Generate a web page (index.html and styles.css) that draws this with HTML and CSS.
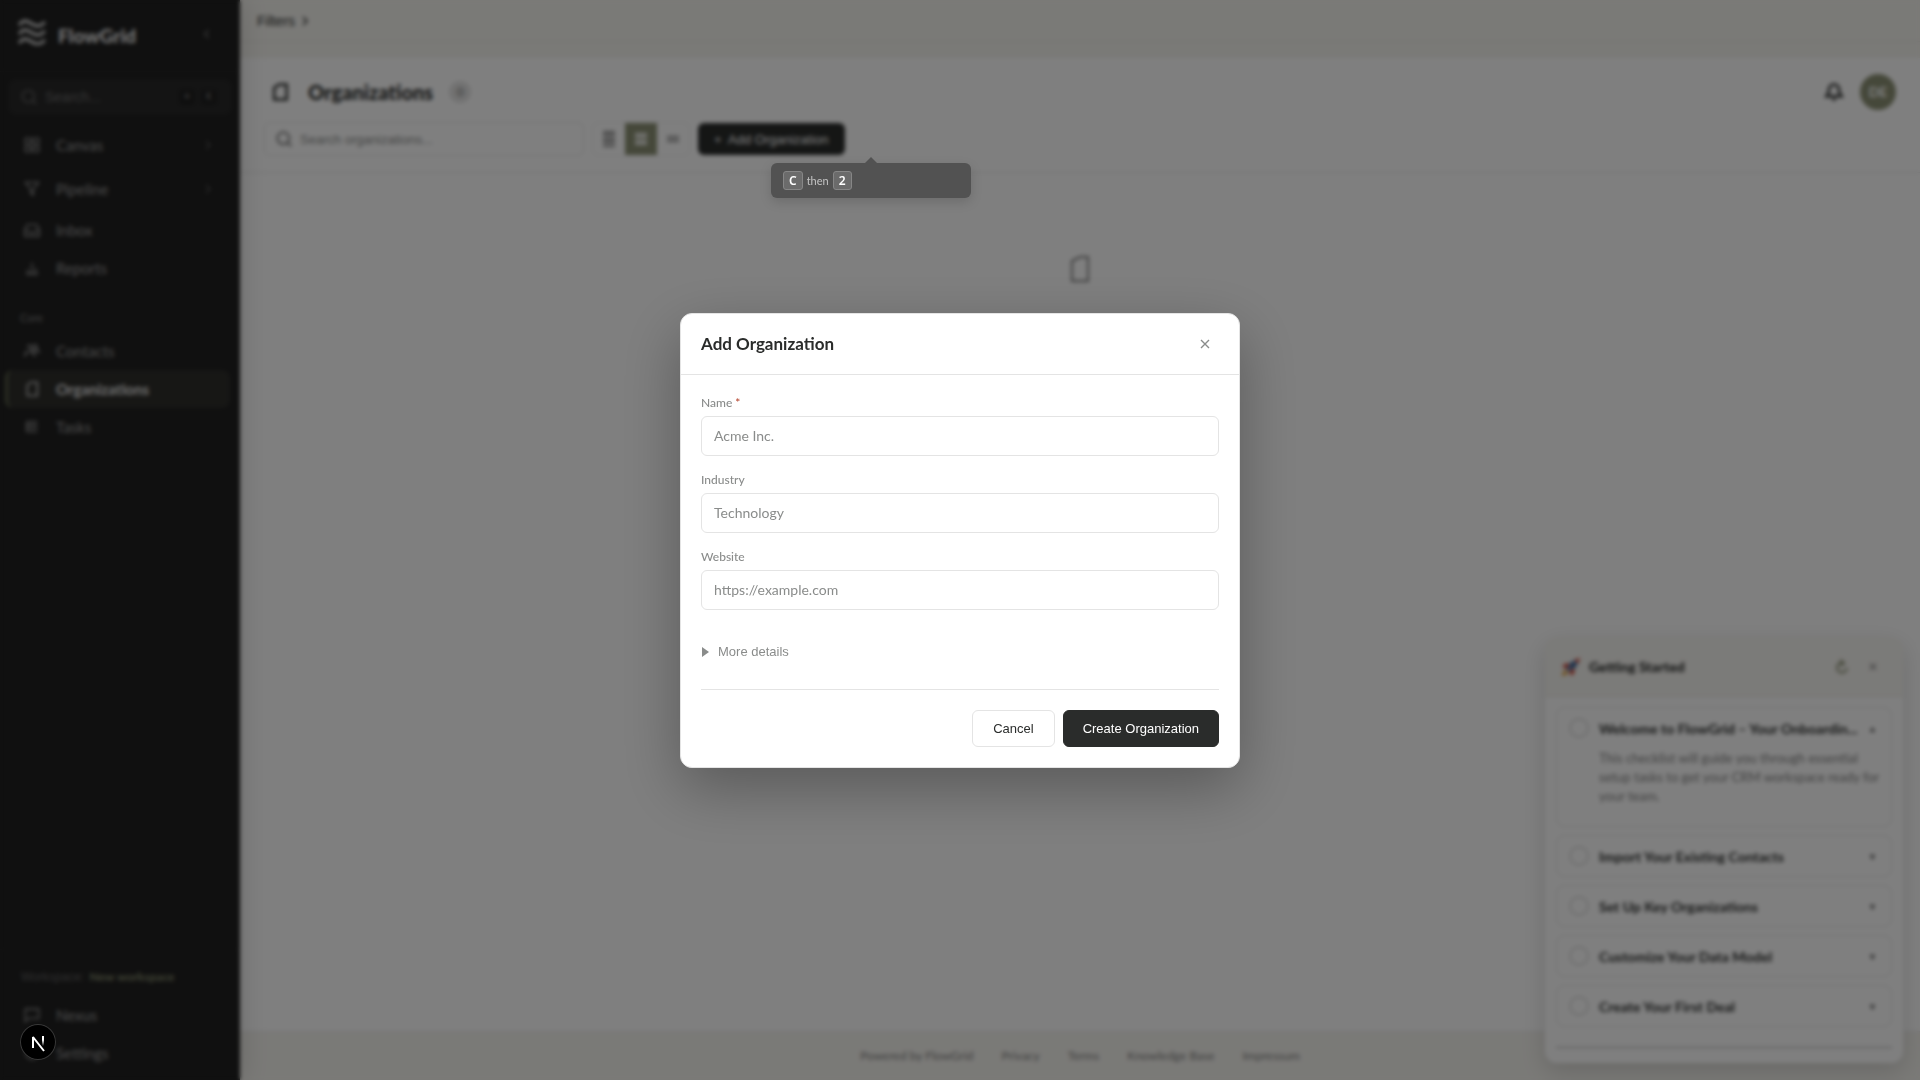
FILE: index.html
```
<!DOCTYPE html>
<html lang="en">
<head>
    <meta charset="UTF-8">
    <meta name="viewport" content="width=device-width, initial-scale=1.0">
    <title>Organizations - FlowGrid</title>
    <link rel="stylesheet" href="styles.css">
</head>
<body>
    <aside class="sidebar">
        <div class="brand">
            <svg class="logo" viewBox="0 0 28 26" width="28" height="26">
                <path d="M1 6c5-6 8-4 13-1s8 3 13-2M1 15c5-6 8-4 13-1s8 3 13-2M1 24c5-6 8-4 13-1s8 3 13-2"/>
            </svg>
            <span class="brand-name">FlowGrid</span>
            <button class="collapse" aria-label="Collapse sidebar">
                <svg class="icon" viewBox="0 0 24 24" width="14" height="14"><path d="M15 5l-7 7 7 7"/></svg>
            </button>
        </div>

        <button class="side-search">
            <svg class="icon" viewBox="0 0 24 24" width="16" height="16"><circle cx="11" cy="11" r="9"/><path d="M17 17l6 6"/></svg>
            <span>Search...</span>
            <kbd>⌘</kbd>
            <kbd>K</kbd>
        </button>

        <nav class="nav">
            <a href="#" class="nav-item tall">
                <svg class="icon" viewBox="0 0 24 24" width="16" height="16"><path d="M2 2h8v8H2zM14 2h8v8h-8zM2 14h8v8H2zM14 14h8v8h-8z"/></svg>
                <span>Canvas</span>
                <svg class="icon chevron" viewBox="0 0 24 24" width="12" height="12"><path d="M8 4l8 8-8 8"/></svg>
            </a>
            <a href="#" class="nav-item tall">
                <svg class="icon" viewBox="0 0 24 24" width="16" height="16"><path d="M2 2h20l-8 10v9l-4-2v-7z"/></svg>
                <span>Pipeline</span>
                <svg class="icon chevron" viewBox="0 0 24 24" width="12" height="12"><path d="M8 4l8 8-8 8"/></svg>
            </a>
            <a href="#" class="nav-item">
                <svg class="icon" viewBox="0 0 24 24" width="16" height="16"><path d="M1 12l4-8h14l4 8v9H1zM1 13h6l2 3h6l2-3h6"/></svg>
                <span>Inbox</span>
            </a>
            <a href="#" class="nav-item">
                <svg class="icon" viewBox="0 0 24 24" width="16" height="16"><path d="M6 20v-6M12 20V4M18 20v-8M3 21h18"/></svg>
                <span>Reports</span>
            </a>
            <h2 class="nav-title">Core</h2>
            <a href="#" class="nav-item">
                <svg class="icon bold" viewBox="0 0 24 24" width="16" height="16"><path d="M1 20c1-5 3-7 6-8M5 6a4 4 0 1 1 4 6c4 1 6 3 7 8M14 3c5-1 7 5 3 8 3 0 5 1 6 4"/></svg>
                <span>Contacts</span>
            </a>
            <a href="#" class="nav-item active">
                <svg class="icon" viewBox="0 0 24 24" width="16" height="16"><path d="M5 6l5-4h10v20H5z"/></svg>
                <span>Organizations</span>
            </a>
            <a href="#" class="nav-item">
                <svg class="icon" viewBox="0 0 24 24" width="16" height="16"><path d="M4 4h16M4 9h16M4 14h16M4 19h16M4 4v15"/></svg>
                <span>Tasks</span>
            </a>
        </nav>

        <div class="side-bottom">
            <div class="workspace">Workspace: <strong>New workspace</strong></div>
            <a href="#" class="nav-item">
                <svg class="icon" viewBox="0 0 24 24" width="16" height="16"><path d="M2 3h20v14H7l-5 5z"/></svg>
                <span>Nexus</span>
            </a>
            <a href="#" class="nav-item">
                <svg class="icon" viewBox="0 0 24 24" width="16" height="16"><circle cx="12" cy="12" r="9"/><circle cx="12" cy="12" r="3"/></svg>
                <span>Settings</span>
            </a>
        </div>
    </aside>

    <div class="page">
        <button class="filters">Filters
            <svg class="icon" viewBox="0 0 24 24" width="12" height="12"><path d="M8 4l8 8-8 8"/></svg>
        </button>

        <main class="content">
            <header class="page-header">
                <div class="title-row">
                    <svg class="icon bold" viewBox="0 0 24 24" width="20" height="20"><path d="M5 7l6-4h9v18H5z"/></svg>
                    <h1>Organizations</h1>
                    <span class="count">0</span>
                    <button class="bell" aria-label="Notifications">
                        <svg class="icon bold" viewBox="0 0 24 24" width="20" height="20"><path d="M3 17h18c-2-2-3-4-3-8a6 6 0 0 0-12 0c0 4-1 6-3 8zM10 21h4"/></svg>
                    </button>
                    <span class="avatar">DE</span>
                </div>
                <div class="toolbar">
                    <label class="search">
                        <svg class="icon bold" viewBox="0 0 24 24" width="16" height="16"><circle cx="11" cy="11" r="9"/><path d="M17 17l6 6"/></svg>
                        <input type="text" placeholder="Search organizations..." aria-label="Search organizations">
                    </label>
                    <div class="view-toggle">
                        <button aria-label="Compact rows"><svg class="icon" viewBox="0 0 16 16" width="16" height="16"><path d="M2 1h12M2 4h12M2 8h12M2 11h12M2 15h12"/></svg></button>
                        <button class="active" aria-label="Normal rows"><svg class="icon" viewBox="0 0 16 16" width="16" height="16"><path d="M2 3h12M2 6h12M2 10h12M2 13h12"/></svg></button>
                        <button aria-label="Wide rows"><svg class="icon" viewBox="0 0 16 16" width="16" height="16"><path d="M2 6h12M2 10h12"/></svg></button>
                    </div>
                    <button class="add-btn">+&nbsp; Add Organization</button>
                </div>
            </header>
            <div class="empty">
                <svg class="icon" viewBox="0 0 20 28" width="20" height="28"><path d="M2 6l8-4h8v24H2z"/></svg>
            </div>
        </main>

        <footer class="footer">
            <span>Powered by <a href="#">FlowGrid</a></span>
            <a href="#">Privacy</a>
            <a href="#">Terms</a>
            <a href="#">Knowledge Base</a>
            <a href="#">Impressum</a>
        </footer>
    </div>

    <section class="onboarding">
        <div class="onboarding-header">
            <svg class="rocket" viewBox="0 0 20 20" width="20" height="20">
                <path fill="#5b8fc7" d="M5 12C7 7 11 3 16 3l1 1c0 5-4 9-9 11z"/>
                <path fill="#d0402c" d="M13 3l6-2-2 6zM1 9l5-3 3 2-4 4zM11 19l3-5-2-3-4 4z"/>
                <path fill="#e39a2d" d="M5 13l2 2-2 3-4 1 1-4z"/>
                <circle cx="12" cy="8" r="2" fill="#2a3f5c"/>
            </svg>
            <h2>Getting Started</h2>
            <button aria-label="Refresh">
                <svg class="icon refresh" viewBox="0 0 16 16" width="16" height="16"><path d="M11 4a5 5 0 1 0 3 5M7 1l4 3-3 3"/></svg>
            </button>
            <button aria-label="Close checklist">✕</button>
        </div>
        <ul class="steps">
            <li>
                <div class="step"><span class="dot"></span><h3>Welcome to FlowGrid – Your Onboardin...</h3><span class="arrow">▲</span></div>
                <p>This checklist will guide you through essential setup tasks to get your CRM workspace ready for your team.</p>
            </li>
            <li><div class="step"><span class="dot"></span><h3>Import Your Existing Contacts</h3><span class="arrow">▼</span></div></li>
            <li><div class="step"><span class="dot"></span><h3>Set Up Key Organizations</h3><span class="arrow">▼</span></div></li>
            <li><div class="step"><span class="dot"></span><h3>Customize Your Data Model</h3><span class="arrow">▼</span></div></li>
            <li><div class="step"><span class="dot"></span><h3>Create Your First Deal</h3><span class="arrow">▼</span></div></li>
        </ul>
        <div class="progress"></div>
    </section>

    <!-- Add organization modal -->
    <div class="backdrop">
        <div class="modal" role="dialog" aria-labelledby="modalTitle">
            <div class="modal-header">
                <h2 id="modalTitle">Add Organization</h2>
                <button class="close" aria-label="Close">
                    <svg viewBox="0 0 10 10" width="10" height="10"><path d="M1 1l8 8M9 1l-8 8"/></svg>
                </button>
            </div>
            <form class="modal-form">
                <div class="field">
                    <label for="orgName">Name <span class="required">*</span></label>
                    <input type="text" id="orgName" placeholder="Acme Inc.">
                </div>
                <div class="field">
                    <label for="orgIndustry">Industry</label>
                    <input type="text" id="orgIndustry" placeholder="Technology">
                </div>
                <div class="field">
                    <label for="orgWebsite">Website</label>
                    <input type="url" id="orgWebsite" placeholder="https://example.com">
                </div>
                <details class="more">
                    <summary>More details</summary>
                </details>
                <div class="actions">
                    <button type="button" class="cancel">Cancel</button>
                    <button type="submit" class="create">Create Organization</button>
                </div>
            </form>
        </div>
    </div>

    <div class="tooltip"><kbd>C</kbd><span>then</span><kbd>2</kbd></div>

    <button class="dev-badge" aria-label="Open dev tools">
        <svg viewBox="0 0 36 36" width="36" height="36">
            <defs>
                <linearGradient id="fade" x1="0" y1="0" x2="0" y2="1">
                    <stop offset="0.4" stop-color="#fff"/>
                    <stop offset="1" stop-color="#fff" stop-opacity="0"/>
                </linearGradient>
            </defs>
            <path d="M13 24V13l11 14" fill="none" stroke="#fff" stroke-width="2" stroke-linejoin="bevel"/>
            <rect x="22" y="12" width="2" height="10" fill="url(#fade)"/>
        </svg>
    </button>
</body>
</html>
```
FILE: styles.css
```
/* Global Styles */
* {
    margin: 0;
    padding: 0;
    box-sizing: border-box;
}

body {
    display: flex;
    min-height: 100vh;
    font-family: Lato, "Liberation Sans", sans-serif;
    font-size: 14px;
    color: #2a2c2b;
    background-color: #ffffff;
}

button, input {
    font-family: "Liberation Sans", Arial, sans-serif;
    font-size: 14px;
    background: none;
    border: none;
}

button {
    cursor: pointer;
}

a {
    color: inherit;
    text-decoration: none;
}

.icon {
    fill: none;
    stroke: currentColor;
    stroke-width: 2;
    flex-shrink: 0;
}

.icon.bold {
    stroke-width: 3;
}

/* Sidebar */
.sidebar {
    width: 240px;
    flex-shrink: 0;
    display: flex;
    flex-direction: column;
    background-color: #202020;
    color: #9a9a9a;
    box-shadow: 4px 0 24px rgba(0, 0, 0, 0.12);
    z-index: 1;
}

.brand {
    display: flex;
    align-items: center;
    height: 72px;
    padding: 0 24px 8px 18px;
    gap: 12px;
    border-bottom: 1px solid #292929;
}

.logo {
    fill: none;
    stroke: #e0e0e0;
    stroke-width: 3;
}

.brand-name {
    flex: 1;
    padding-top: 8px;
    font-size: 19px;
    font-weight: 900;
    color: #e6e6e6;
}

.collapse {
    width: 18px;
    padding-top: 8px;
    color: #808080;
}

.side-search {
    display: flex;
    align-items: center;
    gap: 8px;
    height: 36px;
    margin: 7px 8px 8px;
    padding: 0 16px 0 13px;
    border-radius: 8px;
    background-color: #282828;
    color: #6c6c6c;
    font-size: 14px;
}

.side-search span {
    flex: 1;
    text-align: left;
}

.side-search kbd {
    width: 14px;
    font-size: 10px;
    line-height: 14px;
    background-color: #1c1c1c;
    color: #7c7c7c;
}

.nav {
    display: flex;
    flex-direction: column;
    flex: 1;
    padding-bottom: 12px;
}

.nav-item {
    display: flex;
    align-items: center;
    gap: 16px;
    height: 38px;
    margin: 0 10px 0 5px;
    padding: 0 16px;
    border-left: 3px solid transparent;
    border-radius: 8px;
    font-size: 15px;
}

.nav-item span {
    flex: 1;
}

.nav-item.tall {
    height: 44px;
}

.nav-item .chevron {
    color: #808080;
}

.nav-item.active {
    background-color: #2e2e2b;
    border-left-color: #5a6049;
    color: #e4e4e4;
    font-weight: 700;
}

.nav-title {
    margin: 24px 20px 7px;
    font-size: 11px;
    line-height: 14px;
    font-weight: 400;
    color: #808080;
}

.side-bottom {
    padding: 8px 0;
    border-top: 1px solid #262626;
}

.workspace {
    height: 34px;
    margin: 2px 8px;
    padding: 0 12px;
    border: 1px solid #262626;
    border-radius: 6px;
    font-family: "Liberation Sans", Arial, sans-serif;
    font-size: 12px;
    line-height: 32px;
    color: #606060;
}

.workspace strong {
    margin-left: 2px;
    font-family: Lato, sans-serif;
    color: #80866a;
}

/* Page */
.page {
    flex: 1;
    min-width: 0;
    display: flex;
    flex-direction: column;
    background-color: #f5f4ef;
}

.filters {
    display: flex;
    align-items: center;
    gap: 4px;
    height: 42px;
    margin-bottom: 16px;
    padding: 0 17px;
    border-bottom: 1px solid #e8e8e2;
    color: #2a2c2b;
}

.filters .icon {
    stroke-width: 3;
}

.content {
    flex: 1;
    background-color: #ffffff;
}

.page-header {
    padding: 16px 24px;
    border-bottom: 1px solid #e8e8e8;
}

.title-row {
    display: flex;
    align-items: center;
    height: 36px;
    padding-left: 6px;
    margin-bottom: 12px;
}

h1 {
    margin: 0 16px 0 18px;
    font-size: 20px;
    font-weight: 900;
}

.count {
    width: 22px;
    border-radius: 11px;
    background-color: #e4e4e4;
    font-size: 12px;
    line-height: 22px;
    text-align: center;
    color: #707070;
}

.bell {
    height: 20px;
    margin-left: auto;
    margin-right: 16px;
    color: #2a2c2b;
}

.avatar {
    width: 36px;
    border-radius: 50%;
    background-color: #8b9074;
    color: #ffffff;
    font-weight: 700;
    line-height: 36px;
    text-align: center;
}

.toolbar {
    display: flex;
    align-items: center;
    gap: 8px;
}

.search {
    display: flex;
    align-items: center;
    gap: 8px;
    width: 320px;
    height: 34px;
    padding: 0 11px;
    border: 1px solid #e4e4e4;
    border-radius: 6px;
    color: #808080;
}

.search input {
    flex: 1;
    min-width: 0;
    font-size: 13px;
}

.view-toggle {
    display: flex;
    width: 98px;
    height: 34px;
    border: 1px solid #eeeeee;
    border-radius: 6px;
    color: #808080;
}

.view-toggle button {
    flex: 1;
    display: flex;
    align-items: center;
    justify-content: center;
    color: inherit;
}

.view-toggle .active {
    background-color: #8b9074;
    color: #ffffff;
}

.add-btn {
    height: 32px;
    padding: 0 16px;
    border-radius: 6px;
    background-color: #2a2c2b;
    color: #ffffff;
    font-size: 13px;
}

.empty {
    padding: 82px 0;
    text-align: center;
    color: #808080;
}

/* Footer */
.footer {
    display: flex;
    justify-content: center;
    gap: 28px;
    padding: 17px;
    border-top: 1px solid #ececec;
    font-size: 12px;
    line-height: 14px;
    color: #808080;
}

/* Getting started checklist */
.onboarding {
    position: fixed;
    right: 17px;
    bottom: 17px;
    width: 358px;
    border-radius: 12px;
    background-color: #ffffff;
    box-shadow: 0 8px 24px rgba(0, 0, 0, 0.15);
    overflow: hidden;
}

.onboarding-header {
    display: flex;
    align-items: center;
    gap: 8px;
    height: 60px;
    padding: 0 18px 0 16px;
    border-bottom: 1px solid #e8e8e2;
    background-color: #f7f6f2;
}

.onboarding-header h2 {
    flex: 1;
    font-size: 14px;
    font-weight: 900;
}

.onboarding-header button {
    width: 24px;
    height: 24px;
    color: #808080;
    font-size: 12px;
}

.onboarding-header .refresh {
    display: block;
    margin: 4px auto;
    color: #8b9074;
}

.steps {
    display: flex;
    flex-direction: column;
    gap: 8px;
    padding: 10px 11px 19px;
    list-style: none;
}

.steps li {
    padding: 10px 8px 10px 12px;
    border: 1px solid #e4e4e4;
    border-radius: 8px;
}

.step {
    display: flex;
    align-items: center;
    gap: 10px;
    height: 20px;
    margin-right: 6px;
}

.dot {
    width: 20px;
    height: 20px;
    flex-shrink: 0;
    border: 2px solid #dedede;
    border-radius: 50%;
}

.step h3 {
    flex: 1;
    min-width: 0;
    white-space: nowrap;
    font-size: 14px;
    font-weight: 700;
}

.arrow {
    font-size: 9px;
    color: #606060;
}

.steps p {
    padding: 11px 0 10px 30px;
    font-size: 13px;
    line-height: 19px;
    color: #808080;
}

.progress {
    height: 3px;
    margin: 0 11px 14px;
    background-color: #e0e0e0;
}

/* Modal */
.backdrop {
    position: fixed;
    inset: 0;
    z-index: 10;
    display: flex;
    align-items: center;
    justify-content: center;
    background-color: rgba(0, 0, 0, 0.5);
    backdrop-filter: blur(2px);
}

.modal {
    width: 560px;
    max-width: 90%;
    border: 1px solid #e4e4e4;
    border-radius: 12px;
    background-color: #ffffff;
    box-shadow: 0 20px 60px rgba(0, 0, 0, 0.3);
}

.modal-header {
    display: flex;
    align-items: center;
    justify-content: space-between;
    height: 61px;
    padding: 0 20px;
    border-bottom: 1px solid #e4e4e4;
}

.modal-header h2 {
    font-size: 17px;
    font-weight: 700;
}

.close {
    display: flex;
    padding: 9px;
}

.close path {
    stroke: #8a8c8b;
    stroke-width: 1.4;
}

.modal-form {
    display: flex;
    flex-direction: column;
    gap: 16px;
    padding: 20px;
}

.field {
    display: flex;
    flex-direction: column;
    gap: 5px;
}

.field label {
    font-size: 12px;
    line-height: 16px;
    font-weight: 500;
    color: #8a8c8b;
}

.required {
    color: #b5442e;
}

.field input {
    height: 40px;
    padding: 0 12px;
    border: 1px solid #e4e4e4;
    border-radius: 6px;
    font-family: Lato, sans-serif;
    font-size: 14px;
}

::placeholder {
    color: #8a8c8b;
    opacity: 1;
}

.more {
    padding: 16px 0 11px;
    font-family: "Liberation Sans", Arial, sans-serif;
    font-size: 13px;
    line-height: 20px;
    color: #8a8c8b;
}

.more summary {
    display: flex;
    align-items: center;
    gap: 9px;
    padding-left: 1px;
    cursor: pointer;
}

.more summary::before {
    content: "";
    border: 5px solid transparent;
    border-left: 7px solid #8a8c8b;
    border-right: 0;
}

.actions {
    display: flex;
    justify-content: flex-end;
    gap: 8px;
    padding-top: 20px;
    border-top: 1px solid #e4e4e4;
}

.actions button {
    padding: 10px 20px;
    border: 1px solid #e4e4e4;
    border-radius: 6px;
    font-size: 13px;
    line-height: 15px;
    color: #2a2c2b;
}

.actions .create {
    padding: 10px 19px;
    border-color: #2a2c2b;
    background-color: #2a2c2b;
    color: #ffffff;
}

/* Shortcut tooltip, stays above the backdrop */
.tooltip {
    position: fixed;
    top: 163px;
    left: 771px;
    z-index: 20;
    display: flex;
    align-items: center;
    gap: 4px;
    width: 200px;
    height: 35px;
    padding: 0 12px;
    border-radius: 6px;
    background-color: #525252;
    box-shadow: 0 4px 12px rgba(0, 0, 0, 0.15);
    color: #c4c4c4;
    font-size: 11px;
}

.tooltip::before {
    content: "";
    position: absolute;
    bottom: 100%;
    left: 50%;
    margin-left: -6px;
    border: 6px solid transparent;
    border-top-width: 0;
    border-bottom-color: #525252;
}

.tooltip kbd {
    padding: 0 5px;
    border: 1px solid #868686;
    border-radius: 3px;
    background-color: #6b6b6b;
    color: #ffffff;
    font-family: "Noto Sans", sans-serif;
    font-size: 12px;
    font-weight: 600;
    line-height: 17px;
}

.dev-badge {
    position: fixed;
    left: 20px;
    bottom: 20px;
    z-index: 20;
    width: 36px;
    height: 36px;
    border-radius: 50%;
    background-color: #000000;
    box-shadow: inset 0 0 0 1px #383838;
}
```
